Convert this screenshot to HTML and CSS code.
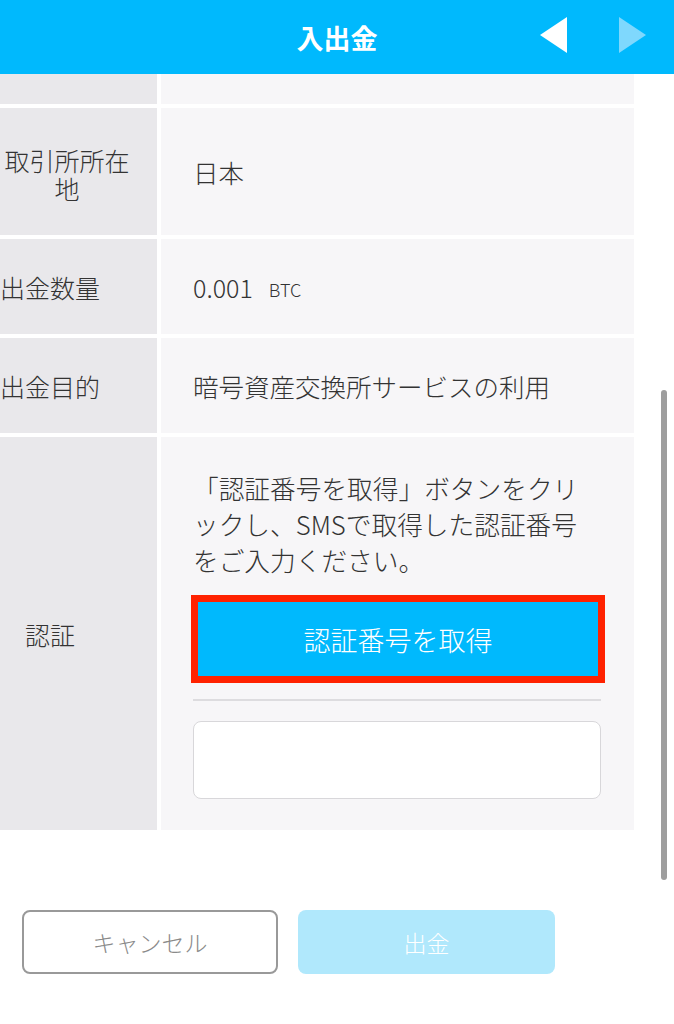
FILE: index.html
```html
<!DOCTYPE html>
<html lang="ja">
<head>
<meta charset="utf-8">
<title>入出金</title>
<link rel="stylesheet" href="styles.css">
</head>
<body>
<div class="screen">
  <header class="topbar">
    <h1 class="title">入出金</h1>
    <div class="nav">
      <svg class="arrow" width="28" height="36" viewBox="0 0 28 36"><polygon points="27,0 27,36 0,18" fill="#ffffff"/></svg>
      <svg class="arrow" width="28" height="36" viewBox="0 0 28 36"><polygon points="0,0 0,36 27,18" fill="#7fd8fd"/></svg>
    </div>
  </header>

  <div class="table">
    <div class="row row-partial">
      <div class="label"></div>
      <div class="value"></div>
    </div>
    <div class="row row-tall">
      <div class="label"><span class="label-text label-wide">取引所所在地</span></div>
      <div class="value">日本</div>
    </div>
    <div class="row row-std">
      <div class="label"><span class="label-text">出金数量</span></div>
      <div class="value"><span class="amount">0.001</span><span class="unit">BTC</span></div>
    </div>
    <div class="row row-std">
      <div class="label"><span class="label-text">出金目的</span></div>
      <div class="value">暗号資産交換所サービスの利用</div>
    </div>
    <div class="row row-auth">
      <div class="label"><span class="label-text">認証</span></div>
      <div class="value value-auth">
        <p class="note">「認証番号を取得」ボタンをクリ<br>ックし、SMSで取得した認証番号<br>をご入力ください。</p>
        <div class="btn-frame"><button class="btn-get">認証番号を取得</button></div>
        <div class="divider"></div>
        <div class="code-input"></div>
      </div>
    </div>
  </div>

  <div class="actions">
    <button class="btn-cancel">キャンセル</button>
    <button class="btn-submit">出金</button>
  </div>

  <div class="scrollbar"></div>
</div>
</body>
</html>
```

FILE: styles.css
```css
html, body {
  margin: 0;
  padding: 0;
  background: #ffffff;
}

body {
  font-family: "Noto Sans CJK JP", "Noto Sans", sans-serif;
  font-weight: 300;
  color: #333333;
}

.screen {
  position: relative;
  width: 674px;
  height: 1024px;
  overflow: hidden;
  background: #ffffff;
}

.topbar {
  height: 74px;
  background: #00b9fd;
  display: flex;
  align-items: center;
  justify-content: center;
  position: relative;
}

.title {
  margin: 0;
  font-size: 27px;
  font-weight: 700;
  color: #ffffff;
}

.nav {
  position: absolute;
  left: 540px;
  top: 17px;
  display: flex;
  gap: 51px;
}

.arrow {
  display: block;
}

.table {
  width: 634px;
  display: flex;
  flex-direction: column;
  gap: 4px;
}

.row {
  display: grid;
  grid-template-columns: 157px 1fr;
  column-gap: 4px;
}

.row-partial { height: 30px; }
.row-tall { height: 127px; }
.row-std { height: 95px; }
.row-auth { height: 393px; }

.label {
  background: #e9e8eb;
  display: flex;
  align-items: center;
  font-size: 25px;
  color: #333333;
}

.label-text {
  width: 100px;
  text-align: center;
  line-height: 30px;
}

.label-wide {
  width: 134px;
  line-height: 28px;
  padding-top: 4px;
}

.value {
  background: #f7f6f8;
  display: flex;
  align-items: center;
  padding: 0 29px 0 32px;
  font-size: 25.5px;
  color: #333333;
}

.amount {
  font-size: 25px;
}

.unit {
  font-size: 18px;
  margin-left: 16px;
  padding-top: 4px;
}

.value-auth {
  flex-direction: column;
  align-items: stretch;
  justify-content: flex-start;
  padding-top: 33px;
}

.note {
  margin: 0;
  font-size: 25.7px;
  line-height: 36px;
  white-space: nowrap;
}

.btn-frame {
  margin: 17px 0 0 -2px;
  width: 400px;
  border: 7px solid #ff2200;
}

.btn-get {
  display: block;
  width: 100%;
  height: 74px;
  border: 0;
  margin: 0;
  background: #00b9fd;
  color: #ffffff;
  font-family: "Noto Sans CJK JP", "Noto Sans", sans-serif;
  font-weight: 300;
  font-size: 27px;
  cursor: pointer;
}

.divider {
  margin-top: 16px;
  height: 2px;
  width: 408px;
  background: #dddcdf;
}

.code-input {
  margin-top: 20px;
  width: 406px;
  height: 76px;
  background: #ffffff;
  border: 1.5px solid #d8d7da;
  border-radius: 8px;
}

.actions {
  display: flex;
  gap: 20px;
  padding-left: 22px;
  margin-top: 80px;
}

.btn-cancel,
.btn-submit {
  width: 257px;
  height: 64px;
  border-radius: 8px;
  font-family: "Noto Sans CJK JP", "Noto Sans", sans-serif;
  font-weight: 300;
  font-size: 23px;
  cursor: pointer;
}

.btn-cancel {
  background: #ffffff;
  border: 2px solid #999999;
  color: #8a8a8a;
  width: 256px;
}

.btn-submit {
  background: #b0e8fc;
  border: 0;
  color: #ffffff;
}

.scrollbar {
  position: absolute;
  left: 661px;
  top: 390px;
  width: 6px;
  height: 490px;
  border-radius: 3px;
  background: #9e9e9e;
}
```
